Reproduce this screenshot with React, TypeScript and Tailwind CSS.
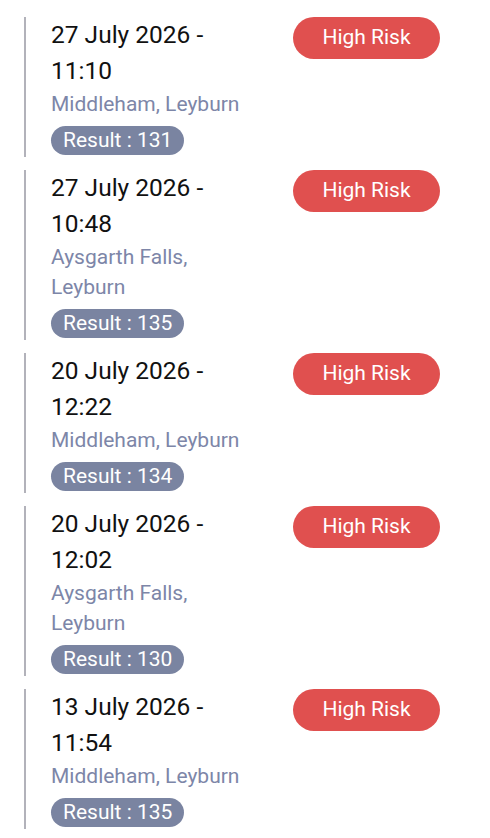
import React from "react";

type Reading = {
  date: string;
  time: string;
  place: string;
  result: number;
};

const readings: Reading[] = [
  { date: "27 July 2026", time: "11:10", place: "Middleham, Leyburn", result: 131 },
  { date: "27 July 2026", time: "10:48", place: "Aysgarth Falls, Leyburn", result: 135 },
  { date: "20 July 2026", time: "12:22", place: "Middleham, Leyburn", result: 134 },
  { date: "20 July 2026", time: "12:02", place: "Aysgarth Falls, Leyburn", result: 130 },
  { date: "13 July 2026", time: "11:54", place: "Middleham, Leyburn", result: 135 },
];

const App: React.FC = () => {
  return (
    <div
      className="min-h-screen w-full bg-white pt-[17px] pl-[24px]"
      style={{ fontFamily: "Roboto, 'Noto Sans', sans-serif" }}
    >
      <div className="flex flex-col gap-[13px]">
        {readings.map((item, i) => (
          <div key={i} className="flex items-start border-l-2 border-[#b2b2ba] pl-[25px] pb-[2px]">
            <div className="w-[206px] flex flex-col items-start">
              <p className="text-[24.5px] leading-[36px] text-[#111111]">
                {item.date} - {item.time}
              </p>
              <p className="text-[21px] leading-[30px] text-[#7d86a8]">{item.place}</p>
              <span className="mt-[7px] h-[29px] rounded-full bg-[#7a84a1] px-[12px] text-[21px] leading-[29px] text-white">
                Result : {item.result}
              </span>
            </div>
            <div className="ml-[36px]">
              <span className="flex h-[42px] w-[147px] items-center justify-center rounded-full bg-[#e0504f] text-[21px] text-white">
                High Risk
              </span>
            </div>
          </div>
        ))}
      </div>
    </div>
  );
};

export default App;
